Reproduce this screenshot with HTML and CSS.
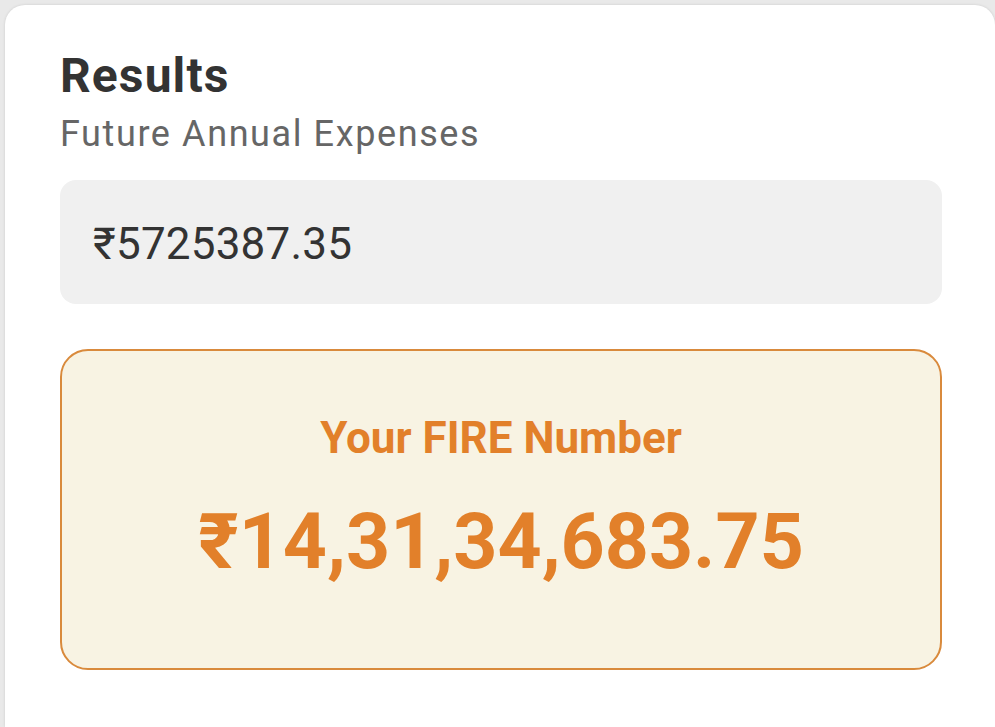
FILE: index.html
```html
<!DOCTYPE html>
<html lang="en">
<head>
<meta charset="utf-8">
<title>Results</title>
<link rel="stylesheet" href="styles.css">
</head>
<body>
<div class="card">
  <h2 class="title">Results</h2>
  <div class="subtitle">Future Annual Expenses</div>
  <div class="field">₹5725387.35</div>
  <div class="fire">
    <div class="fire-label">Your FIRE Number</div>
    <div class="fire-value">₹14,31,34,683.75</div>
  </div>
</div>
</body>
</html>
```
FILE: styles.css
```css
html, body {
  margin: 0;
  padding: 0;
  background: #e9e9e9;
  overflow: hidden;
  width: 995px;
  height: 727px;
}
body {
  font-family: Roboto, "Noto Sans", sans-serif;
}
.card {
  box-sizing: border-box;
  margin: 5px 0 0 5px;
  width: 990px;
  height: 722px;
  padding: 42.6px 53px 0 55px;
  background: #ffffff;
  border-radius: 20px 20px 0 0;
  box-shadow: 0 0 3px rgba(0,0,0,0.12);
}
.title {
  margin: 0;
  font-size: 48px;
  line-height: 56px;
  font-weight: 700;
  letter-spacing: 1.1px;
  color: #333333;
}
.subtitle {
  margin-top: 9px;
  font-size: 36px;
  line-height: 42px;
  letter-spacing: 1.6px;
  color: #666666;
}
.field {
  margin-top: 25.3px;
  height: 124px;
  box-sizing: border-box;
  padding: 4px 33px 0 33px;
  font-size: 44px;
  line-height: 120px;
  letter-spacing: 0.2px;
  color: #333333;
  background: #f0f0f0;
  border-radius: 16px;
}
.fire {
  margin-top: 45px;
  border: 2px solid #d98a3c;
  border-radius: 28px;
  background: #f8f3e3;
  padding: 61px 20px 79.7px;
  text-align: center;
  color: #e2802a;
}
.fire-label {
  font-size: 44px;
  line-height: 52px;
  font-weight: 700;
}
.fire-value {
  margin-top: 32.3px;
  font-size: 77px;
  line-height: 92px;
  font-weight: 700;
}
```
